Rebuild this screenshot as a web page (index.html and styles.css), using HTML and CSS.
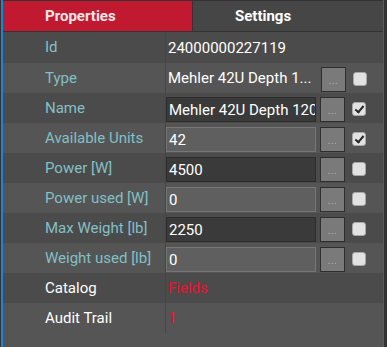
FILE: index.html
```html
<!DOCTYPE html>
<html lang="en">
  <head>
    <meta charset="UTF-8" />
    <meta name="viewport" content="width=device-width, initial-scale=1.0" />
    <title>Properties</title>
    <link rel="stylesheet" href="styles.css">
  </head>
  <body>
    <div class="panel">
      <header class="tabs">
        <div class="tab tab-active">Properties</div>
        <div class="tab">Settings</div>
      </header>
      <main class="rows">
        <div class="row row-dark row-first">
          <div class="label">Id</div>
          <div class="value"><span class="text">24000000227119</span></div>
        </div>
        <div class="row">
          <div class="label">Type</div>
          <div class="value">
            <span class="text text-clip">Mehler 42U Depth 1...</span>
            <button class="more">...</button>
            <span class="check"></span>
          </div>
        </div>
        <div class="row row-dark">
          <div class="label">Name</div>
          <div class="value">
            <input class="field field-dark" type="text" value="Mehler 42U Depth 1200 mm" />
            <button class="more">...</button>
            <span class="check checked"></span>
          </div>
        </div>
        <div class="row">
          <div class="label">Available Units</div>
          <div class="value">
            <input class="field" type="text" value="42" />
            <button class="more">...</button>
            <span class="check checked"></span>
          </div>
        </div>
        <div class="row row-dark">
          <div class="label">Power [W]</div>
          <div class="value">
            <input class="field field-dark" type="text" value="4500" />
            <button class="more">...</button>
            <span class="check"></span>
          </div>
        </div>
        <div class="row">
          <div class="label">Power used [W]</div>
          <div class="value">
            <input class="field" type="text" value="0" />
            <button class="more">...</button>
            <span class="check"></span>
          </div>
        </div>
        <div class="row row-dark">
          <div class="label">Max Weight [lb]</div>
          <div class="value">
            <input class="field field-dark" type="text" value="2250" />
            <button class="more">...</button>
            <span class="check"></span>
          </div>
        </div>
        <div class="row">
          <div class="label">Weight used [lb]</div>
          <div class="value">
            <input class="field" type="text" value="0" />
            <button class="more">...</button>
            <span class="check"></span>
          </div>
        </div>
        <div class="row row-dark">
          <div class="label label-white">Catalog</div>
          <div class="value"><span class="text text-red">Fields</span></div>
        </div>
        <div class="row">
          <div class="label label-white">Audit Trail</div>
          <div class="value"><span class="text text-red">1</span></div>
        </div>
      </main>
    </div>
  </body>
</html>
```

FILE: styles.css
```css
body {
  margin: 0;
  padding: 0;
  background-color: #333333;
  font-family: Roboto, "Liberation Sans", Arial, sans-serif;
  height: 347px;
  overflow: hidden;
}

.panel {
  margin-left: 1px;
  width: 380px;
  height: 347px;
  border-left: 2px solid #1b84d8;
  border-right: 1px solid #5c5c5c;
  background-color: #555555;
}

.tabs {
  display: flex;
  height: 30px;
  border-top: 1px solid #333333;
  border-bottom: 1px solid #333333;
  background-color: #333333;
}

.tab {
  box-sizing: border-box;
  width: 190px;
  padding-left: 42px;
  line-height: 30px;
  font-size: 15px;
  font-weight: bold;
  color: #ffffff;
  background-color: #464646;
}

.tab-active {
  width: 189px;
  margin-right: 1px;
  background-color: #c11a30;
  color: #f0e6e8;
}

.row {
  display: flex;
  height: 30px;
  background-color: #555555;
}

.row-dark {
  background-color: #4b4b4b;
}

.row-first {
  height: 31px;
}

.label {
  box-sizing: border-box;
  width: 163px;
  padding-left: 42px;
  border-right: 1px solid #454545;
  font-size: 15px;
  line-height: 30px;
  color: #82c0c6;
  white-space: nowrap;
}

.label-white {
  color: #ffffff;
}

.value {
  flex: 1;
  display: flex;
  align-items: center;
  min-width: 0;
}

.text {
  padding-left: 2px;
  font-size: 15px;
  color: #ffffff;
  white-space: nowrap;
}

.text-clip {
  width: 149px;
  overflow: hidden;
}

.text-red {
  color: #f0102c;
}

.field {
  box-sizing: border-box;
  width: 150px;
  height: 25px;
  margin: 3px 0 0 0;
  padding: 0 0 0 2px;
  border: 1px solid #777777;
  background-color: #5f5f5f;
  color: #ffffff;
  font-family: Roboto, "Liberation Sans", Arial, sans-serif;
  font-size: 15px;
  outline: none;
}

.field-dark {
  border-color: #2c2c2c;
  background-color: #3a3a3a;
}

.more {
  box-sizing: border-box;
  display: flex;
  justify-content: center;
  align-items: flex-end;
  width: 25px;
  height: 25px;
  margin: 3px 0 0 4px;
  padding: 0 0 6px 0;
  border: 1px solid #2e2e2e;
  background-color: #7a7a7a;
  color: #b4b4b4;
  font-family: Roboto, "Liberation Sans", Arial, sans-serif;
  font-size: 10px;
  line-height: 8px;
  letter-spacing: 0.5px;
  cursor: pointer;
}

.check {
  position: relative;
  box-sizing: border-box;
  width: 14px;
  height: 14px;
  margin: 2px 0 0 7px;
  border: 1px solid #a8a8a8;
  border-radius: 3px;
  background-color: #e2e2e2;
}

.checked::after {
  content: "";
  position: absolute;
  left: 4px;
  top: 1px;
  width: 3px;
  height: 7px;
  border-right: 2px solid #262626;
  border-bottom: 2px solid #262626;
  transform: rotate(40deg);
}
```
